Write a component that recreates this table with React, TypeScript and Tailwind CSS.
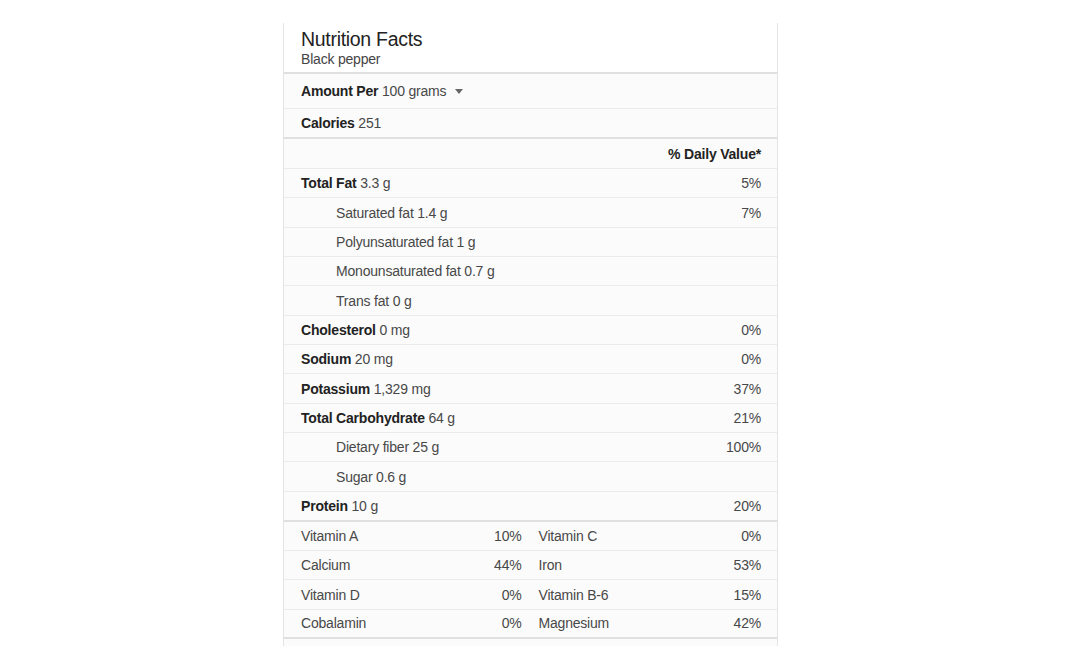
import React from 'react';

type Nutrient = { label: string; amount: string; dv?: string; sub?: boolean };

const nutrients: Nutrient[] = [
  { label: 'Total Fat', amount: '3.3 g', dv: '5%' },
  { label: 'Saturated fat', amount: '1.4 g', dv: '7%', sub: true },
  { label: 'Polyunsaturated fat', amount: '1 g', sub: true },
  { label: 'Monounsaturated fat', amount: '0.7 g', sub: true },
  { label: 'Trans fat', amount: '0 g', sub: true },
  { label: 'Cholesterol', amount: '0 mg', dv: '0%' },
  { label: 'Sodium', amount: '20 mg', dv: '0%' },
  { label: 'Potassium', amount: '1,329 mg', dv: '37%' },
  { label: 'Total Carbohydrate', amount: '64 g', dv: '21%' },
  { label: 'Dietary fiber', amount: '25 g', dv: '100%', sub: true },
  { label: 'Sugar', amount: '0.6 g', sub: true },
];

const vitamins: [string, string, string, string][] = [
  ['Vitamin A', '10%', 'Vitamin C', '0%'],
  ['Calcium', '44%', 'Iron', '53%'],
  ['Vitamin D', '0%', 'Vitamin B-6', '15%'],
  ['Cobalamin', '0%', 'Magnesium', '42%'],
];

const NutrientRow = ({ n }: { n: Nutrient }) => (
  <div className="flex items-center justify-between h-[29.35px] border-b border-[#ebebeb] pl-[17px] pr-[16px]">
    {n.sub ? (
      <span className="pl-[35px] text-[#484848]">
        {n.label} {n.amount}
      </span>
    ) : (
      <span className="text-[#484848]">
        <b className="text-[#222]">{n.label}</b> {n.amount}
      </span>
    )}
    {n.dv && <span className="text-[#484848]">{n.dv}</span>}
  </div>
);

export default function App() {
  return (
    <div className="min-h-screen bg-white pt-[23px]" style={{ fontFamily: '"Liberation Sans", Arial, sans-serif' }}>
      <div className="ml-[283px] w-[495px] h-[623px] overflow-hidden bg-[#fbfbfb] border-x border-[#e4e4e4] text-[14px] leading-none tracking-[-0.2px]">
        {/* Header */}
        <div className="h-[51px] border-b-2 border-[#e0e0e0] pl-[17px] pt-[5px] bg-white">
          <div className="text-[19.5px] text-[#222] leading-[22px] tracking-[-0.3px]">Nutrition Facts</div>
          <div className="text-[14px] text-[#444] leading-[16px] mt-[1px]">Black pepper</div>
        </div>

        <div className="flex items-center h-[35px] border-b border-[#ebebeb] pl-[17px] text-[#484848]">
          <b className="text-[#222]">Amount Per</b>&nbsp;100 grams
          <svg width="8" height="5" viewBox="0 0 8 5" className="ml-[9px] mt-[1px]">
            <path d="M0 0h8L4 5z" fill="#666" />
          </svg>
        </div>

        <div className="flex items-center h-[30px] border-b-2 border-[#e0e0e0] pl-[17px] text-[#484848]">
          <b className="text-[#222]">Calories</b>&nbsp;251
        </div>

        <div className="flex items-center justify-end h-[30px] border-b border-[#ebebeb] pr-[16px]">
          <b className="text-[#222]">% Daily Value*</b>
        </div>

        {nutrients.map(n => (
          <NutrientRow key={n.label} n={n} />
        ))}

        <div className="flex items-center justify-between h-[30px] border-b-2 border-[#e0e0e0] pl-[17px] pr-[16px] text-[#484848]">
          <span>
            <b className="text-[#222]">Protein</b> 10 g
          </span>
          <span>20%</span>
        </div>

        {vitamins.map((v, i) => (
          <div
            key={v[0]}
            className={`grid grid-cols-2 h-[29.35px] text-[#484848] ${
              i === vitamins.length - 1 ? 'border-b-2 border-[#e0e0e0]' : 'border-b border-[#ebebeb]'
            }`}
          >
            <div className="flex items-center justify-between pl-[17px] pr-[9px]">
              <span>{v[0]}</span>
              <span>{v[1]}</span>
            </div>
            <div className="flex items-center justify-between pl-[8px] pr-[16px]">
              <span>{v[2]}</span>
              <span>{v[3]}</span>
            </div>
          </div>
        ))}
      </div>
    </div>
  );
}
